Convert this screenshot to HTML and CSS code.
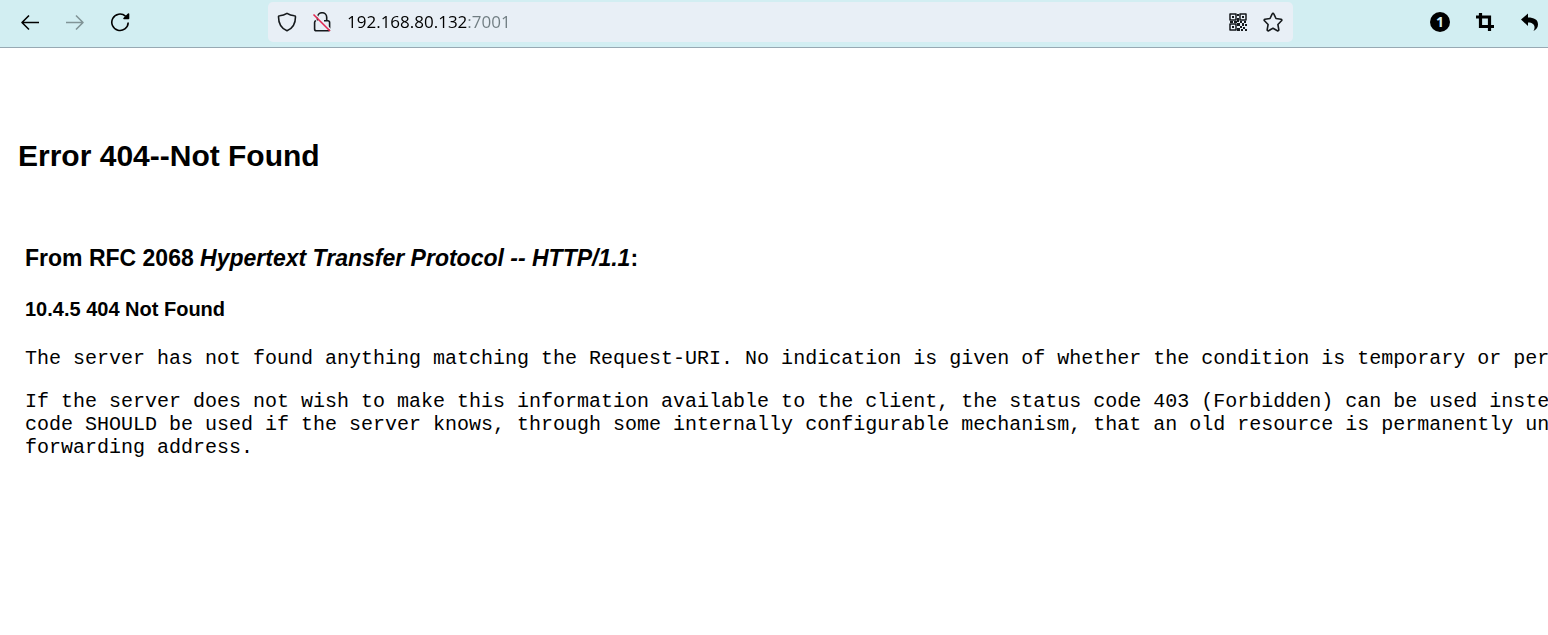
FILE: index.html
```html
<!DOCTYPE html>
<html lang="en">
<head>
<meta charset="utf-8">
<meta name="viewport" content="width=device-width, initial-scale=1">
<title>Error 404--Not Found</title>
<link rel="stylesheet" href="styles.css">
</head>
<body>
<header class="toolbar">
  <nav class="nav" aria-label="History">
    <button class="icon-button" type="button" aria-label="Back"><svg width="20" height="20" viewBox="0 0 20 20"><path d="M19 10.5H2M9 3.5l-7 7 7 7"/></svg></button>
    <button class="icon-button" type="button" aria-label="Forward" disabled><svg width="20" height="20" viewBox="0 0 20 20"><path d="M1 10.5h17M11 3.5l7 7-7 7"/></svg></button>
    <button class="icon-button" type="button" aria-label="Reload"><svg width="20" height="20" viewBox="0 0 20 20"><path d="M15.5 4.2A8.200 8.200 0 1 0 18.200 10.500"/><path class="solid" d="M18.500 2v4.500h-4.500z"/></svg></button>
  </nav>
  <div class="address">
    <button class="icon-button" type="button" aria-label="Tracking protection"><svg width="20" height="20" viewBox="0 0 20 20"><path d="M10 1.3C7.500 3 5 3.600 2.600 3.700c-.7 0-1.100.4-1.100 1.100 0 5.500 1.700 11.300 8.500 14 6.800-2.700 8.500-8.500 8.500-14 0-.7-.4-1.100-1.100-1.100C15 3.600 12.500 3 10 1.300z"/></svg></button>
    <button class="icon-button" type="button" aria-label="Connection not secure"><svg width="20" height="20" viewBox="0 0 20 20"><path d="M5.500 8.500V5.300a4.600 4.600 0 0 1 9.200 0v3.200M4 8.800c-1 .2-1.400.7-1.400 1.700v6.400c0 1.200.6 1.800 1.800 1.800h11.400c1.200 0 1.800-.6 1.800-1.800v-6.400c0-1.200-.6-1.800-1.800-1.800H12"/><path class="slash-gap" d="M2.500 1.500 19 18"/><path class="slash" d="M1.500 2.500 18 19"/></svg></button>
    <input class="url" type="text" aria-label="Address" value="192.168.80.132:7001">
    <button class="icon-button" type="button" aria-label="QR code"><svg width="20" height="20" viewBox="0 0 20 20"><path class="qr" d="M2 2h6v6H2zM12 2h6v6h-6zM2 12h6v6H2z"/><path class="qr-dots" d="M4 4h2v2H4zM14 4h2v2h-2zM4 14h2v2H4zM9 2h2v2H9zM9 6h2v4H9zM2 9h3v2H2zM6 9h3v2H6zM12 9h2v2h-2zM16 9h2v2h-2zM9 11h3v3H9zM14 11h2v3h-2zM17 12h2v2h-2zM12 14h2v2h-2zM9 16h3v3H9zM15 15h2v2h-2zM13 17h2v2h-2zM17 17h2v2h-2z"/></svg></button>
    <button class="icon-button" type="button" aria-label="Bookmark this page"><svg width="20" height="20" viewBox="0 0 20 20"><path d="M9.200 1.800c.3-.7 1.300-.7 1.600 0l2.200 4.700 5 .7c.8.1 1.100 1 .5 1.600l-3.600 3.700.9 5.200c.1.8-.7 1.400-1.400 1L10 16.200l-4.400 2.500c-.7.4-1.500-.2-1.400-1l.9-5.200L1.500 8.800C.9 8.200 1.200 7.300 2 7.200l5-.7z"/></svg></button>
  </div>
  <div class="tools">
    <button class="icon-button" type="button" aria-label="1 notification"><span class="count">1</span></button>
    <button class="icon-button" type="button" aria-label="Crop"><svg width="20" height="20" viewBox="0 0 20 20"><path class="crop" d="M1 5h13.500v14M5.500 1v13.500H19"/></svg></button>
    <button class="icon-button" type="button" aria-label="Undo"><svg width="20" height="20" viewBox="0 0 20 20"><path class="fill" d="M1 7.500 8 1.500v4c6 0 10 2 10 7 0 3-1.600 5-4.500 6.500C16 14.500 14 10.500 8 10.500v3.500z"/></svg></button>
  </div>
</header>
<main class="page">
  <h1 class="title">Error 404--Not Found</h1>
  <section class="details">
    <h2 class="source">From RFC 2068 <i>Hypertext Transfer Protocol -- HTTP/1.1</i>:</h2>
    <h3 class="clause">10.4.5 404 Not Found</h3>
    <p class="message">The server has not found anything matching the Request-URI. No indication is given of whether the condition is temporary or per</p>
    <p class="message">If the server does not wish to make this information available to the client, the status code 403 (Forbidden) can be used inste
code SHOULD be used if the server knows, through some internally configurable mechanism, that an old resource is permanently un
forwarding address.</p>
  </section>
</main>
</body>
</html>
```
FILE: styles.css
```css
* { box-sizing: border-box; }
body {
  margin: 0;
  background: #fff;
  color: #000;
  font-family: "Liberation Sans", Arial, sans-serif;
}
.toolbar {
  display: grid;
  grid-template-columns: 268fr 1025fr 255fr;
  align-items: center;
  height: 48px;
  padding: 0 0 3px;
  background: #d2eef2;
  border-bottom: 1px solid #97a9b3;
}
.nav, .address, .tools { display: flex; align-items: center; }
.nav { gap: 25px; padding-left: 20px; }
.tools { gap: 25px; justify-content: flex-end; padding-right: 8px; }
.address {
  height: 40px;
  gap: 15px;
  padding: 0 10px 0 9px;
  background: #e8eff6;
  border-radius: 5px;
}
.icon-button {
  display: flex;
  flex: none;
  width: 20px;
  height: 20px;
  padding: 0;
  border: 0;
  background: none;
  color: #000;
}
.icon-button:disabled { color: #819497; }
.icon-button svg {
  fill: none;
  stroke: currentColor;
  stroke-width: 1.6;
  stroke-linejoin: round;
}
.address .icon-button { color: #15191c; }
.icon-button .solid { fill: currentColor; }
.icon-button .slash { stroke: #e22850; }
.icon-button .slash-gap { stroke: #e8eff6; }
.icon-button .qr { stroke-width: 1.5; }
.icon-button .qr-dots, .icon-button .fill { fill: currentColor; stroke: none; }
.icon-button .crop { stroke-width: 3.2; stroke-linejoin: miter; }
.url {
  flex: 1;
  min-width: 0;
  height: 30px;
  padding: 0;
  border: 0;
  font: 17px/30px "Open Sans", "Noto Sans", sans-serif;
  color: transparent;
  caret-color: #000;
  background: linear-gradient(90deg, #000 121px, #6f7c81 121px);
  -webkit-background-clip: text;
  background-clip: text;
}
.count {
  width: 20px;
  height: 20px;
  border-radius: 50%;
  background: #000;
  color: #d2eef2;
  font: bold 14px/20px "Open Sans", sans-serif;
  text-align: center;
}
.page { padding: 88px 0 0 18px; overflow: hidden; }
.title { margin: 0; font-size: 30px; line-height: 40px; }
.details { padding: 68px 0 0 7px; }
.source { margin: 0; font-size: 23px; line-height: 28px; }
.clause { margin: 25px 0 26px; font-size: 20px; line-height: 24px; }
.message {
  margin: 0 0 20px;
  font: 20px/23px "Liberation Mono", "Courier New", monospace;
  white-space: pre;
}
```
